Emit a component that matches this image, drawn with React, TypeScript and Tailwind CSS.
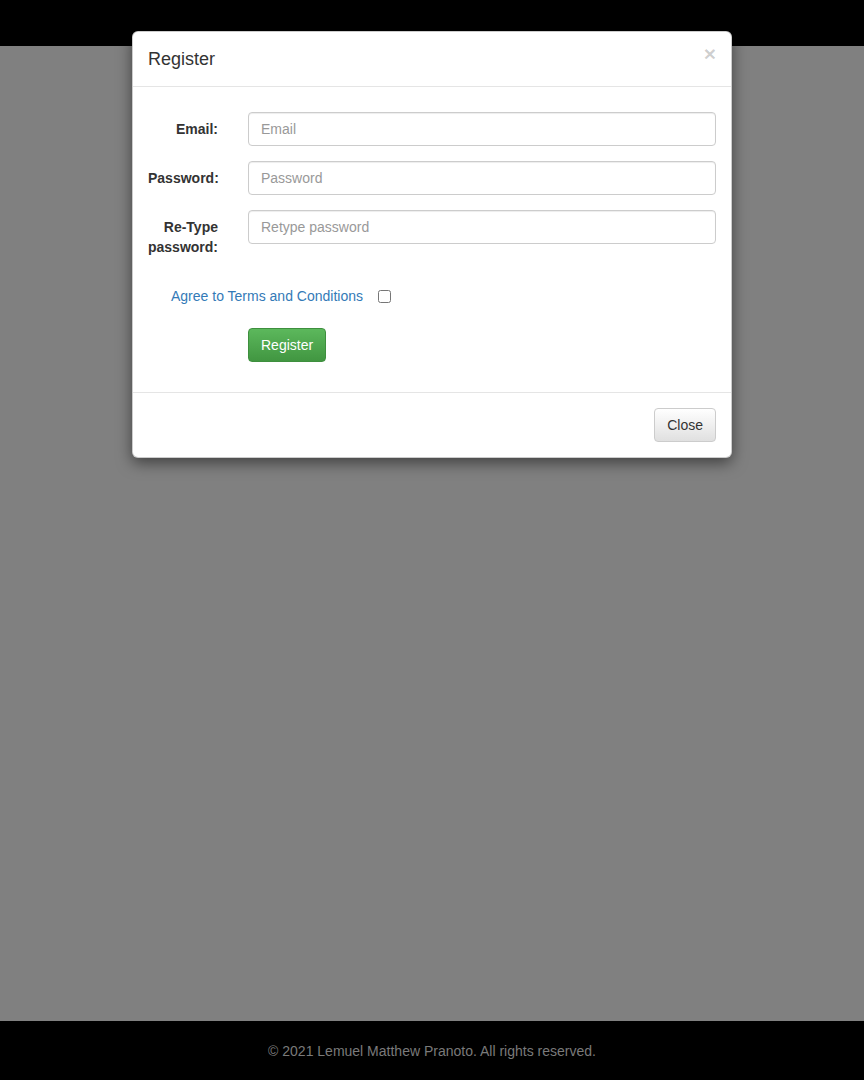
export default function App() {
  return (
    <div className="relative flex min-h-[1080px] flex-col bg-[#808080] font-['Liberation_Sans',Arial,sans-serif] text-[14px] leading-[20px] text-[#333]">
      {/* Navbar under backdrop */}
      <div className="h-[46px] bg-black" />
      <div className="flex-1" />
      {/* Footer */}
      <footer className="flex h-[59px] items-center justify-center bg-black text-[#7a7a7a]">
        © 2021 Lemuel Matthew Pranoto. All rights reserved.
      </footer>

      {/* Register modal */}
      <div className="absolute left-[132px] top-[31px] w-[600px] rounded-[6px] border border-black/20 bg-white shadow-[0_5px_15px_rgba(0,0,0,0.5)]">
        <div className="flex items-start justify-between border-b border-[#e5e5e5] px-[15px] pb-[14px] pt-[14px]">
          <h4 className="text-[18px] leading-[26px] text-[#333]">Register</h4>
          <button className="-mt-[5px] text-[21px] font-bold leading-[26px] text-black/20">×</button>
        </div>

        <div className="px-[15px] pb-[30px] pt-[25px]">
          <FormRow label="Email:" placeholder="Email" />
          <FormRow label="Password:" placeholder="Password" />
          <FormRow label="Re-Type password:" placeholder="Retype password" />

          <div className="mt-[29px] flex items-center pl-[23px]">
            <a className="text-[#337ab7]">Agree to Terms and Conditions</a>
            <input type="checkbox" className="ml-[15px] h-[13px] w-[13px]" />
          </div>

          <div className="mt-[22px] pl-[100px]">
            <button className="h-[34px] rounded-[4px] border border-[#3e8f3e] bg-gradient-to-b from-[#5cb85c] to-[#419641] px-[12px] text-white">
              Register
            </button>
          </div>
        </div>

        <div className="flex justify-end border-t border-[#e5e5e5] p-[15px]">
          <button className="h-[34px] rounded-[4px] border border-[#ccc] bg-gradient-to-b from-white to-[#e0e0e0] px-[12px] text-[#333]">
            Close
          </button>
        </div>
      </div>
    </div>
  )
}

function FormRow({ label, placeholder }: { label: string; placeholder: string }) {
  return (
    <div className="mb-[15px] flex items-start">
      <label className="w-[70px] pt-[7px] text-right font-bold">{label}</label>
      <input
        placeholder={placeholder}
        className="ml-[30px] h-[34px] w-[468px] rounded-[4px] border border-[#ccc] px-[12px] text-[14px] text-[#555] shadow-[inset_0_1px_1px_rgba(0,0,0,0.075)] outline-none placeholder:text-[#999]"
      />
    </div>
  )
}
